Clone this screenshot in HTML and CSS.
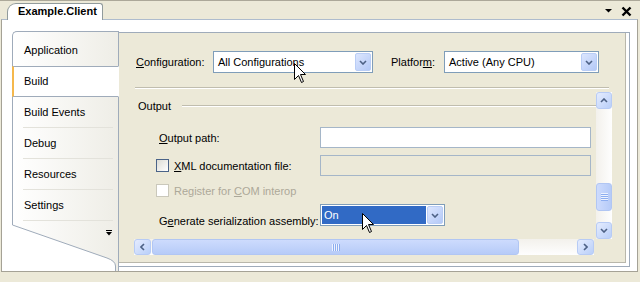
FILE: index.html
```html
<!DOCTYPE html>
<html lang="en">
<head>
    <meta charset="UTF-8">
    <title>Example.Client - Build</title>
    <link rel="stylesheet" href="styles.css">
</head>
<body>
    <div class="window">
        <div class="strip">
            <div class="doctab">Example.Client</div>
            <svg class="strip-tools" width="30" height="11" viewBox="0 0 30 11">
                <path d="M2 3 H9 L5.5 6.5 Z" fill="#000"/>
                <path d="M19.5 1.5 L27.5 9.5 M27.5 1.5 L19.5 9.5" stroke="#000" stroke-width="2.4" fill="none"/>
            </svg>
        </div>
        <div class="doc">
            <div class="pages">
                <div class="pages-list">
                    <div class="ptab is-before-active">Application</div>
                    <div class="ptab is-active">Build</div>
                    <div class="ptab">Build Events</div>
                    <div class="ptab">Debug</div>
                    <div class="ptab">Resources</div>
                    <div class="ptab">Settings</div>
                </div>
                <svg class="pages-foot" width="107" height="50" viewBox="0 0 107 50">
                    <defs>
                        <linearGradient id="pg" x1="0" x2="1" y1="0" y2="0">
                            <stop offset="0" stop-color="#ffffff"/>
                            <stop offset="1" stop-color="#eeede6"/>
                        </linearGradient>
                    </defs>
                    <path d="M0 0 V4 L95 37 Q103 40 103 45 V50 H107 V0 Z" fill="url(#pg)"/>
                    <path d="M0.5 0 V4 L95 37 Q103.5 40 103.5 45 V50" fill="none" stroke="#9fabba"/>
                    <path d="M106.5 0 V50" stroke="#9fabba"/>
                    <path d="M94 9.5 H100" stroke="#000"/>
                    <path d="M94 11 H100 L97 14.5 Z" fill="#000"/>
                </svg>
            </div>
            <div class="page">
                <div class="panel">
                    <div class="config-row">
                        <span class="lbl lbl-config"><u>C</u>onfiguration:</span>
                        <div class="combo combo-config">
                            <span class="combo-text">All Configurations</span>
                            <span class="combo-btn"><svg width="8" height="5" viewBox="0 0 8 5"><path d="M1 1 L4 4 L7 1" stroke="#4d6185" stroke-width="1.6" fill="none"/></svg></span>
                        </div>
                        <span class="lbl lbl-platform">Platfor<u>m</u>:</span>
                        <div class="combo combo-platform">
                            <span class="combo-text">Active (Any CPU)</span>
                            <span class="combo-btn"><svg width="8" height="5" viewBox="0 0 8 5"><path d="M1 1 L4 4 L7 1" stroke="#4d6185" stroke-width="1.6" fill="none"/></svg></span>
                        </div>
                    </div>
                    <div class="sep"></div>
                    <div class="scroller">
                        <div class="viewport">
                            <div class="group-head">Output</div>
                            <div class="fields">
                                <div class="field">
                                    <span class="field-label"><u>O</u>utput path:</span>
                                    <span class="textbox"></span>
                                </div>
                                <div class="field field-xml">
                                    <span class="field-label has-check"><span class="check"></span><span><u>X</u>ML documentation file:</span></span>
                                    <span class="textbox is-disabled"></span>
                                </div>
                                <div class="field field-com">
                                    <span class="field-label has-check is-disabled"><span class="check is-disabled"></span><span>Register for <u>C</u>OM interop</span></span>
                                </div>
                                <div class="field field-gen">
                                    <span class="field-label">G<u>e</u>nerate serialization assembly:</span>
                                    <div class="combo combo-gen">
                                        <span class="combo-text is-selected">On</span>
                                        <span class="combo-btn"><svg width="8" height="5" viewBox="0 0 8 5"><path d="M1 1 L4 4 L7 1" stroke="#4d6185" stroke-width="1.6" fill="none"/></svg></span>
                                    </div>
                                </div>
                            </div>
                        </div>
                        <div class="vscroll">
                            <span class="sb-btn"><svg width="8" height="5" viewBox="0 0 8 5"><path d="M1 4 L4 1 L7 4" stroke="#4d6185" stroke-width="1.6" fill="none"/></svg></span>
                            <span class="thumb vthumb"><svg width="7" height="8" viewBox="0 0 7 8"><path d="M0 0.5 H7 M0 2.5 H7 M0 4.5 H7 M0 6.5 H7" stroke="#eef3fe"/><path d="M0 1.5 H7 M0 3.5 H7 M0 5.5 H7 M0 7.5 H7" stroke="#8daef0"/></svg></span>
                            <span class="sb-btn sb-end"><svg width="8" height="5" viewBox="0 0 8 5"><path d="M1 1 L4 4 L7 1" stroke="#4d6185" stroke-width="1.6" fill="none"/></svg></span>
                        </div>
                        <div class="hscroll">
                            <span class="sb-btn"><svg width="5" height="8" viewBox="0 0 5 8"><path d="M4 1 L1 4 L4 7" stroke="#4d6185" stroke-width="1.6" fill="none"/></svg></span>
                            <span class="thumb hthumb"><svg width="8" height="7" viewBox="0 0 8 7"><path d="M0.5 0 V7 M2.5 0 V7 M4.5 0 V7 M6.5 0 V7" stroke="#eef3fe"/><path d="M1.5 0 V7 M3.5 0 V7 M5.5 0 V7 M7.5 0 V7" stroke="#8daef0"/></svg></span>
                            <span class="sb-btn sb-end"><svg width="5" height="8" viewBox="0 0 5 8"><path d="M1 1 L4 4 L1 7" stroke="#4d6185" stroke-width="1.6" fill="none"/></svg></span>
                        </div>
                        <div class="corner"></div>
                    </div>
                </div>
            </div>
        </div>
        <svg class="cursor cursor-a" width="13" height="21" viewBox="0 0 13 21"><path d="M0.5 0.5 V16.5 L4.5 12.5 L7.5 19.5 L9.5 18.5 L6.5 11.5 H11.5 Z" fill="#fff" stroke="#000"/></svg>
        <svg class="cursor cursor-b" width="13" height="21" viewBox="0 0 13 21"><path d="M0.5 0.5 V16.5 L4.5 12.5 L7.5 19.5 L9.5 18.5 L6.5 11.5 H11.5 Z" fill="#fff" stroke="#000"/></svg>
    </div>
</body>
</html>
```

FILE: styles.css
```css
* {
    box-sizing: border-box;
}

body {
    margin: 0;
    background: #ece9d8;
    font-family: "Liberation Sans", Arial, sans-serif;
    font-size: 11px;
    color: #000;
}

u {
    text-decoration: underline;
    text-underline-offset: 1px;
}

.window {
    position: relative;
    width: 640px;
    height: 282px;
    overflow: hidden;
}

/* document tab strip */
.strip {
    display: flex;
    align-items: flex-end;
    height: 19px;
    border-top: 1px solid #aca899;
    padding: 0 7px 0 7px;
}
.doctab {
    position: relative;
    z-index: 1;
    width: 96px;
    height: 17px;
    margin-bottom: -1px;
    padding-left: 10px;
    border: 1px solid #919b9c;
    border-bottom: none;
    border-radius: 9px 3px 0 0;
    background: #fff;
    font-weight: bold;
    line-height: 15px;
}
.strip-tools {
    align-self: flex-start;
    margin: 5px 0 0 auto;
}

/* document body */
.doc {
    display: flex;
    width: 637px;
    height: 253px;
    margin-left: 1px;
    border: 1px solid #a5a296;
    border-top-color: #aebccd;
    background: #fff;
    padding: 11px 7px 0 10px;
}

/* vertical page tabs */
.pages {
    display: flex;
    flex-direction: column;
    width: 107px;
}
.pages-list {
    padding-top: 3px;
    border-top: 1px solid #9fabba;
    border-left: 1px solid #9fabba;
    border-top-left-radius: 5px;
    background: linear-gradient(90deg, #fff, #eeede6);
    box-shadow: inset -1px 0 0 #9fabba;
}
.ptab {
    height: 31px;
    padding-left: 11px;
    line-height: 31px;
    border-right: 1px solid #9fabba;
    background: linear-gradient(#e3e2db, #e3e2db) no-repeat 10px 100% / 90px 1px;
}
.ptab.is-before-active {
    background: none;
}
.ptab.is-active {
    margin-left: -1px;
    padding-left: 10px;
    line-height: 29px;
    border-top: 1px solid #9fabba;
    border-bottom: 1px solid #9fabba;
    border-left: 2px solid #f5b84c;
    border-right-color: #fff;
    background: #fff;
}
.pages-foot {
    display: block;
}

/* property page */
.page {
    width: 511px;
    height: 235px;
    margin-top: 1px;
    border: 1px solid #9fabba;
    border-left: none;
    padding: 0 3px 3px 0;
    background: #fff;
}
.panel {
    height: 100%;
    background: #ece9d8;
    border-right: 1px solid #b9b7ab;
    border-bottom: 1px solid #b9b7ab;
}
.config-row {
    display: flex;
    align-items: center;
    padding: 18px 0 0 17px;
}
.lbl-config {
    width: 77px;
}
.lbl-platform {
    width: 53px;
    margin-left: 18px;
}
.combo {
    display: flex;
    align-items: center;
    height: 22px;
    padding: 1px;
    border: 1px solid #7f9db9;
    background: #fff;
}
.combo-config {
    width: 160px;
}
.combo-platform {
    width: 155px;
}
.combo-text {
    flex: 1;
    padding-left: 3px;
    white-space: nowrap;
}
.combo-text.is-selected {
    height: 18px;
    margin-right: 1px;
    padding-left: 2px;
    line-height: 18px;
    background: #316ac5;
    color: #fff;
}
.combo-btn {
    display: flex;
    align-items: center;
    justify-content: center;
    width: 16px;
    height: 18px;
    border: 1px solid #b9cdf6;
    border-radius: 2px;
    background: linear-gradient(135deg, #dce6fe, #b4c9f7);
}
.sep {
    width: 474px;
    margin: 14px 0 0 16px;
    border-top: 1px solid #c0bdae;
    border-bottom: 1px solid #fff;
}

/* scrolled settings area */
.scroller {
    display: grid;
    grid-template-columns: 463px 16px;
    grid-template-rows: 147px 16px;
    width: 479px;
    margin: 3px 0 0 14px;
}
.viewport {
    overflow: hidden;
}
.group-head {
    display: flex;
    align-items: center;
    height: 16px;
    margin-top: 6px;
    padding-left: 5px;
}
.group-head::after {
    content: "";
    flex: 1;
    margin-left: 11px;
    border-top: 1px solid #c0bdae;
    border-bottom: 1px solid #fff;
}
.fields {
    margin-top: 13px;
    padding-left: 26px;
}
.field {
    display: flex;
    align-items: center;
    height: 21px;
}
.field-xml {
    margin-top: 7px;
}
.field-com {
    height: 17px;
    margin-top: 6px;
}
.field-gen {
    height: 22px;
    margin-top: 5px;
}
.field-gen .field-label {
    align-self: flex-end;
    margin-bottom: -1px;
}
.field-label {
    width: 161px;
    white-space: nowrap;
}
.field-label.has-check {
    display: flex;
    align-items: center;
    width: 164px;
    margin-left: -3px;
}
.field-label.is-disabled {
    color: #aca899;
}
.check {
    width: 13px;
    height: 13px;
    margin-right: 5px;
    border: 1px solid #4a6388;
    background: linear-gradient(135deg, #dcdcd5, #fff);
}
.check.is-disabled {
    border-color: #cac8bb;
    background: #fff;
}
.textbox {
    width: 271px;
    height: 21px;
    border: 1px solid #a5b6c8;
    background: #fff;
}
.textbox.is-disabled {
    background: #ece9d8;
}
.combo-gen {
    width: 125px;
}

/* scrollbars */
.vscroll {
    display: flex;
    flex-direction: column;
    background: linear-gradient(90deg, #f3f1ec, #fefefe);
}
.hscroll {
    display: flex;
    margin: 0 2px 0 1px;
    background: linear-gradient(#f3f1ec, #fefefe);
}
.sb-btn {
    display: flex;
    align-items: center;
    justify-content: center;
    width: 16px;
    height: 17px;
    border: 1px solid #b7cbf5;
    border-radius: 3px;
    background: linear-gradient(135deg, #e5ecfe, #b9cff9);
}
.hscroll .sb-btn {
    width: 17px;
    height: 16px;
}
.sb-end {
    margin: auto 0 0 0;
}
.hscroll .sb-end {
    margin: 0 0 0 auto;
}
.thumb {
    display: flex;
    align-items: center;
    justify-content: center;
    border: 1px solid #b1c6f3;
    border-radius: 3px;
}
.vthumb {
    height: 28px;
    margin-top: 74px;
    background: linear-gradient(90deg, #cddbfd, #b6cbf8);
}
.hthumb {
    width: 367px;
    margin-left: 1px;
    background: linear-gradient(#cddbfd, #b6cbf8);
}

/* mouse pointers drawn over the page */
.cursor {
    position: absolute;
}
.cursor-a {
    left: 294px;
    top: 63px;
}
.cursor-b {
    left: 362px;
    top: 213px;
}
```
